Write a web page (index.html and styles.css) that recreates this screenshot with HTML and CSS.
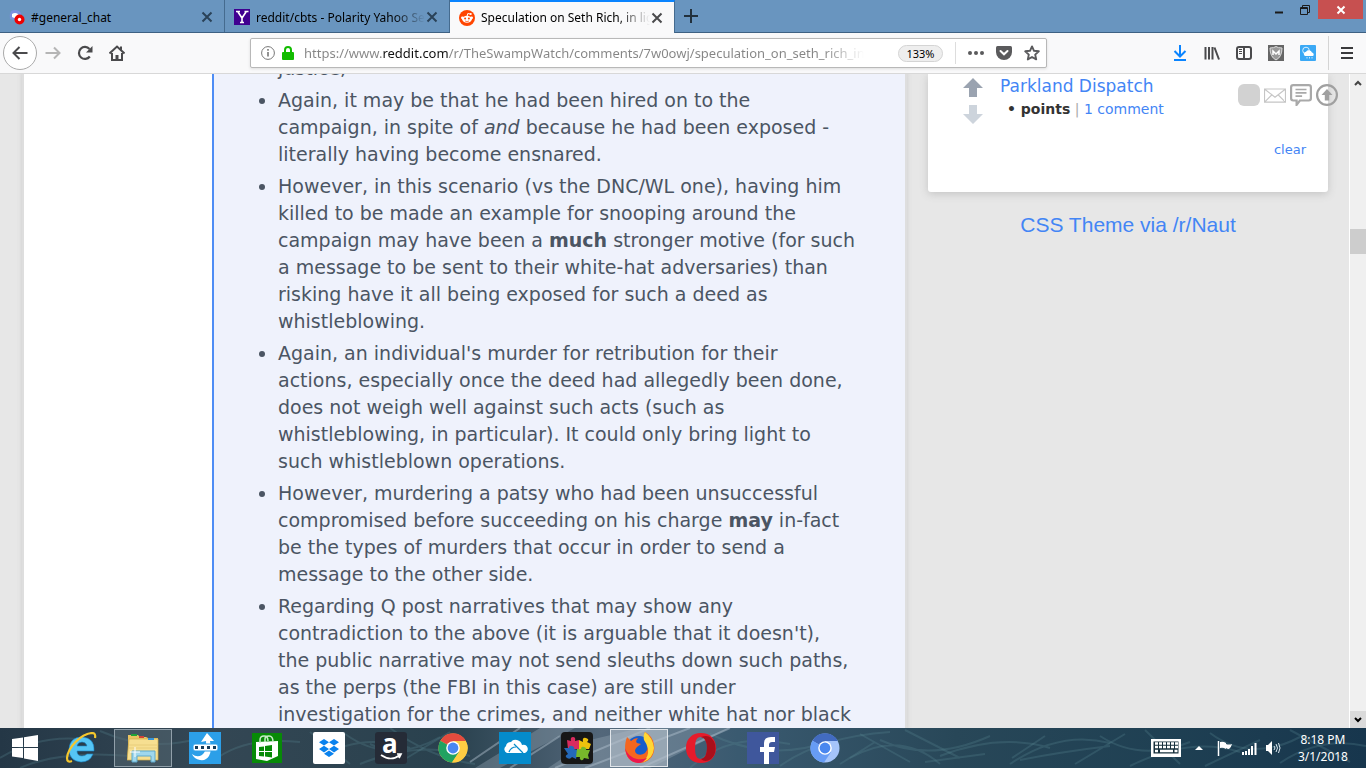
FILE: index.html
```
<!DOCTYPE html>
<html lang="en">
<head>
    <meta charset="utf-8">
    <title>Speculation on Seth Rich</title>
    <link rel="stylesheet" href="styles.css">
</head>
<body>
    <header class="tabbar">
        <div class="tab">
            <svg class="favicon" viewBox="0 0 16 16"><path d="M2 2Q6 0 10 2L12 4V10Q6 12 1 10Q0 6 2 2Z" fill="#7c8fe0"/><path d="M3 5Q6 3 9 5L10 8Q6 10 3 8Z" fill="#fff"/><circle cx="10.5" cy="10.5" r="5" fill="#e00"/><circle cx="10.5" cy="10.5" r="1.7" fill="#fff"/></svg>
            <button class="tab-title">#general_chat</button>
            <button class="tab-close" aria-label="Close tab"><svg viewBox="0 0 12 12"><path d="M1.5 1.5L10.5 10.5M10.5 1.5L1.5 10.5"/></svg></button>
        </div>
        <div class="tab">
            <svg class="favicon" viewBox="0 0 16 16"><path fill="#400090" d="M0 0h16v16H0z"/><path d="M4 3L8 9L12 3M8 9v5M2 2.5h4M10.5 2.5h4M6 13.5h4" fill="none" stroke="#fff" stroke-width="1.6"/></svg>
            <button class="tab-title fade">reddit/cbts - Polarity Yahoo Sea</button>
            <button class="tab-close" aria-label="Close tab"><svg viewBox="0 0 12 12"><path d="M1.5 1.5L10.5 10.5M10.5 1.5L1.5 10.5"/></svg></button>
        </div>
        <div class="tab active">
            <svg class="favicon" viewBox="0 0 16 16"><circle cx="8" cy="8" r="8" fill="#ff4500"/><path d="M8 6.5l.8-3 2.7.6" fill="none" stroke="#fff"/><circle cx="11.7" cy="4" r="1.1" fill="#fff"/><circle cx="3.4" cy="7.8" r="1.4" fill="#fff"/><circle cx="12.6" cy="7.8" r="1.4" fill="#fff"/><ellipse cx="8" cy="9.3" rx="4.8" ry="3.5" fill="#fff"/><circle cx="6.1" cy="8.6" r="1" fill="#ff4500"/><circle cx="9.9" cy="8.6" r="1" fill="#ff4500"/><path d="M6 11q2 1.2 4 0" fill="none" stroke="#ff4500" stroke-width=".7"/></svg>
            <button class="tab-title fade">Speculation on Seth Rich, in lig</button>
            <button class="tab-close" aria-label="Close tab"><svg viewBox="0 0 12 12"><path d="M1.5 1.5L10.5 10.5M10.5 1.5L1.5 10.5"/></svg></button>
        </div>
        <button class="new-tab" aria-label="New tab"><svg viewBox="0 0 14 14"><path d="M7 0v14M0 7h14"/></svg></button>
        <div class="window-buttons">
            <button aria-label="Minimize"><svg viewBox="0 0 10 10"><path d="M1 7.5h8" stroke="#1a1a1a" stroke-width="2"/></svg></button>
            <button aria-label="Restore"><svg viewBox="0 0 10 10"><path d="M.5 2.5h7v7h-7zM.5 3.5h7M2.5 2V.5h7v7H8" fill="none" stroke="#1a1a1a"/></svg></button>
            <button class="window-close" aria-label="Close"><svg viewBox="0 0 10 10"><path d="M1.5 1.5l7 7M8.5 1.5l-7 7" stroke="#fff" stroke-width="2"/></svg></button>
        </div>
    </header>

    <nav class="toolbar">
        <button class="back" aria-label="Back"><svg viewBox="0 0 16 16"><path d="M15.5 8H1.5M7.5 2l-6 6 6 6"/></svg></button>
        <button class="nav-button forward" aria-label="Forward"><svg viewBox="0 0 16 16"><path d="M.5 8h14M9 2.5l5.5 5.5L9 13.5"/></svg></button>
        <button class="nav-button" aria-label="Reload"><svg viewBox="0 0 16 16"><path d="M12.8 11.5A6 6 0 1 1 12.5 4" stroke-width="2.2"/><path d="M15.5 1v6.5H9z" fill="#4a4a4c" stroke="none"/></svg></button>
        <button class="nav-button" aria-label="Home"><svg viewBox="0 0 16 16"><path d="M.5 8.5L8 1.5l7.5 7M3 8v7h10V8M12 1.5v3" stroke-width="2"/><path d="M6.5 15v-5h3v5z" fill="#4a4a4c" stroke="none"/></svg></button>
        <form class="urlbar">
            <svg class="info" viewBox="0 0 14 14"><circle cx="7" cy="7" r="6.4" fill="none" stroke="#777"/><path d="M7 6v4.5M7 3v1.8" stroke="#777" stroke-width="1.6"/></svg>
            <svg class="lock" viewBox="0 0 12 14"><path d="M3 7V4a3 3 0 0 1 6 0v3" fill="none" stroke="#12bc00" stroke-width="2"/><rect y="6" width="12" height="8" rx="1" fill="#12bc00"/></svg>
            <input class="url" type="text" aria-label="Address" value="https://www.reddit.com/r/TheSwampWatch/comments/7w0owj/speculation_on_seth_rich_in_">
            <button type="button" class="zoom">133%</button>
            <span class="divider"></span>
            <button type="button" class="url-action" aria-label="Page actions"><svg viewBox="0 0 16 16"><g fill="#5a5a5c"><circle cx="2" cy="8" r="2"/><circle cx="8" cy="8" r="2"/><circle cx="14" cy="8" r="2"/></g></svg></button>
            <button type="button" class="url-action" aria-label="Save to Pocket"><svg viewBox="0 0 16 16"><path d="M1.5 1h13Q16 1 16 2.5V7a8 8 0 0 1-16 0V2.500Q0 1 1.5 1Z" fill="#5a5a5c"/><path d="M4.500 6L8 9.300 11.500 6" fill="none" stroke="#fff" stroke-width="2" stroke-linecap="round"/></svg></button>
            <button type="button" class="url-action" aria-label="Bookmark"><svg viewBox="0 0 16 16"><path d="M8 1.4l2 4.4 4.8.5-3.6 3.3 1 4.8L8 12l-4.2 2.4 1-4.8L1.200 6.300 6 5.800z" fill="none" stroke="#5a5a5c" stroke-width="1.9" stroke-linejoin="round"/></svg></button>
        </form>
        <div class="tools">
            <button aria-label="Downloads"><svg viewBox="0 0 16 16"><path d="M8 0v11M2.5 6L8 11.5 13.5 6M2 15h12" fill="none" stroke="#0a84ff" stroke-width="2"/></svg></button>
            <button aria-label="Library"><svg viewBox="0 0 16 16"><path d="M1.5 2v12.5M5 2v12.5M8.5 2v12.5M10.500 2.500l4.500 12" fill="none" stroke="#4a4a4c" stroke-width="2"/></svg></button>
            <button aria-label="Sidebars"><svg viewBox="0 0 16 16"><rect x="1" y="2" width="14" height="12" rx="2" fill="none" stroke="#4a4a4c" stroke-width="2"/><path d="M8 2v12" stroke="#4a4a4c" stroke-width="2"/><path d="M3 4.5h3M3 6.500h3M3 8.500h3" stroke="#4a4a4c"/></svg></button>
            <button aria-label="Shield extension"><svg viewBox="0 0 16 16"><path fill="#666" d="M0 0h16v16H0z"/><path d="M2 3Q6 3 8 1.500 10 3 14 3 14 12 8 15 2 12 2 3Z" fill="#999" stroke="#ddd"/><path d="M5 10V6l3 3 3-3v4" fill="none" stroke="#fff" stroke-width="1.5"/></svg></button>
            <button aria-label="Weather"><svg viewBox="0 0 16 16"><rect width="16" height="16" rx="1" fill="#3ba9f5"/><circle cx="6" cy="5.5" r="3.3" fill="none" stroke="#d8f0ff"/><path d="M5 11a2.300 2.300 0 0 1 1-4.300 3.500 3.500 0 0 1 6 .8A2 2 0 0 1 13 11Z" fill="#fff"/><path d="M7 12v1.500M9.500 12v1.500M12 12v1.500" stroke="#c4e7ff"/></svg></button>
            <span class="menu-divider"></span>
            <button aria-label="Menu"><svg viewBox="0 0 16 16"><path d="M2 3h12M2 8h12M2 13h12" stroke="#3a3a3c" stroke-width="2"/></svg></button>
        </div>
    </nav>

    <div class="viewport">
        <main class="thread">
            <article class="comment">
                <ul>
                    <li>justice,</li>
                    <li>Again, it may be that he had been hired on to the<br>campaign, in spite of <em>and</em> because he had been exposed -<br>literally having become ensnared.</li>
                    <li>However, in this scenario (vs the DNC/WL one), having him<br>killed to be made an example for snooping around the<br>campaign may have been a <strong>much</strong> stronger motive (for such<br>a message to be sent to their white-hat adversaries) than<br>risking have it all being exposed for such a deed as<br>whistleblowing.</li>
                    <li>Again, an individual's murder for retribution for their<br>actions, especially once the deed had allegedly been done,<br>does not weigh well against such acts (such as<br>whistleblowing, in particular). It could only bring light to<br>such whistleblown operations.</li>
                    <li>However, murdering a patsy who had been unsuccessful<br>compromised before succeeding on his charge <strong>may</strong> in-fact<br>be the types of murders that occur in order to send a<br>message to the other side.</li>
                    <li>Regarding Q post narratives that may show any<br>contradiction to the above (it is arguable that it doesn't),<br>the public narrative may not send sleuths down such paths,<br>as the perps (the FBI in this case) are still under<br>investigation for the crimes, and neither white hat nor black</li>
                </ul>
            </article>
        </main>
        <aside class="side">
            <section class="recent">
                <div class="entry">
                    <div class="votes">
                        <button aria-label="Upvote"><svg viewBox="0 0 20 19"><path d="M10 0l10 10h-6v9H6v-9H0z" fill="#9aa3b0"/></svg></button>
                        <button aria-label="Downvote"><svg viewBox="0 0 20 19"><path d="M10 19L0 9h6V0h8v9h6z" fill="#cdd4dc"/></svg></button>
                    </div>
                    <div>
                        <a class="entry-title" href="#">Parkland Dispatch</a>
                        <p class="entry-meta"><b>• points</b> <i>|</i> <a href="#">1 comment</a></p>
                    </div>
                </div>
                <a class="clear" href="#">clear</a>
            </section>
            <a class="theme" href="#">CSS Theme via /r/Naut</a>
        </aside>
        <div class="quick-icons">
            <button class="blank" aria-label="Settings"></button>
            <button aria-label="Messages"><svg viewBox="0 0 20 20"><path d="M.5 4.500h19v12H.5zM1 5l9 7 9-7M1 16l6-6M19 16l-6-6" fill="none" stroke="#c5c5c5"/></svg></button>
            <button aria-label="Comments"><svg viewBox="0 0 20 20"><path d="M3 1h14q2 0 2 2v10q0 2-2 2H9l-3 4v-4H3q-2 0-2-2V3q0-2 2-2z" fill="#fff" stroke="#a9a9a9" stroke-width="2"/><path d="M5 5h10M5 8h10M5 11h6" stroke="#a9a9a9" stroke-width="1.5"/></svg></button>
            <button aria-label="Back to top"><svg viewBox="0 0 20 20"><circle cx="10" cy="10" r="9" fill="none" stroke="#a0a0a0" stroke-width="2"/><path d="M10 4.500l5 5.500h-3v5H8v-5H5z" fill="#a0a0a0"/></svg></button>
        </div>
        <div class="scrollbar">
            <button aria-label="Scroll up"><svg viewBox="0 0 8 8"><path d="M1 6l3-3 3 3"/></svg></button>
            <span class="track-before"></span>
            <span class="thumb"></span>
            <span class="track-after"></span>
            <button class="pressed" aria-label="Scroll down"><svg viewBox="0 0 8 8"><path d="M1 2l3 3 3-3"/></svg></button>
        </div>
    </div>

    <footer class="taskbar">
        <svg class="wallpaper" viewBox="0 0 1366 40" preserveAspectRatio="none">
            <g fill="none" stroke="#5b8a94" stroke-opacity=".28" stroke-width="2">
                <path d="M0 30Q40 5 90 12M20 40Q60 22 130 28M100 3Q150 25 200 10M210 36Q240 8 300 14M320 30Q360 4 410 20M345 6Q390 38 440 9M360 36Q420 12 470 28M390 0Q430 30 475 36"/>
                <path d="M690 40Q730 3 790 16M710 6Q770 35 830 13M780 38Q820 9 890 4M850 30Q900 2 940 36M880 12Q930 35 990 8M940 28Q1000 5 1050 20M1010 36Q1060 2 1110 15M1100 8Q1140 34 1190 14M1130 38Q1190 8 1240 24M1210 5Q1250 35 1300 9M1280 35Q1320 8 1366 18"/>
                <path d="M840 36L875 14M860 6L910 34M905 2L960 30M925 34L985 26M1012 30L1045 8M1020 32Q1060 24 1110 18M1075 36L1125 6M1145 2L1180 36M1205 38L1260 12M1290 2L1350 34M370 16L400 30M400 34L450 4M310 4L350 36"/>
            </g>
            <path d="M475 40L540 0H575L500 40zM548 40L590 12 640 0H730L650 40z" fill="#9aabb9" fill-opacity=".35"/>
            <path d="M555 40L650 0M585 40L690 0M640 40L730 0M470 34L520 0M510 40L560 8" stroke="#b4c4d0" stroke-opacity=".45" stroke-width="2"/>
        </svg>
        <button class="task start" aria-label="Start"><svg viewBox="0 0 26 26"><path d="M0 4l11-1.600V12H0zM12 2.200L26 0v12H12zM0 13h11v10L0 21.500zM12 13h14v13l-14-2.500z" fill="#fff"/></svg></button>
        <button class="task" aria-label="Internet Explorer"><svg viewBox="0 0 32 32"><path d="M29 19H12q0 5 5 5 3 0 5-2h6q-3 8-12 8Q4 29 4 17 5 5 17 5q13 1 12 14zM12 14h10q-1-4-5-4t-5 4z" fill="#55c5f5" fill-rule="evenodd" stroke="#1786c9" stroke-width=".6"/><path d="M7 29q-5 2-5-3C3 15 16 2 27 1q4 0 3 5" fill="none" stroke="#f6c72d" stroke-width="2.200"/></svg></button>
        <button class="task open" aria-label="File Explorer"><svg viewBox="0 0 32 32"><path d="M1 7V3h10l2 2h6l2 1h10v21H1z" fill="#e9c462"/><path d="M2 7h29v21H0z" fill="#f6df91" stroke="#d2ac47" stroke-width=".7"/><path d="M4 2h6v2H4z" fill="#20a336"/><path d="M12 4h5v2h-5z" fill="#d34336"/><path d="M21 6h6v2h-6z" fill="#3793d6"/><path d="M2 13h29M2 16h29" stroke="#e8cd7b"/><path d="M5 30V19h23v11h-4v-6H10v6z" fill="#9fd7ed" stroke="#5fa9cb"/><path d="M8 15v10M3 20h10" stroke="#fff"/></svg></button>
        <button class="task" aria-label="Password manager"><svg viewBox="0 0 32 32"><path fill="#2c9fe8" d="M0 0h32v32H0z"/><path d="M3 22q5 4 10 1 5-4 4-14l-5 1 6-9 7 8-4 0q2 10-1 15-3 5-9 4-6-1-8-6z" fill="#fff"/><rect x="4" y="12" width="25" height="7" rx="2" fill="#fff" stroke="#2c9fe8"/><path d="M6 15.500h3M12 15.500h3M18 15.500h3M24 15.500h3" stroke="#153d5b" stroke-width="3"/></svg></button>
        <button class="task" aria-label="Store"><svg viewBox="0 0 32 32"><path fill="#078a07" d="M1 1h30v30H1z"/><path d="M5 10l22-1v15l-11 5-11-2z" fill="#fff"/><path d="M9 11V8q0-4 4-4t4 5M14 10V7q0-3 4-3t4 6" fill="none" stroke="#c9edc9" stroke-width="1.5"/><path d="M8 15l5-.6V19H8zM14 14l7-1v6h-7zM8 20h5v4.500L8 24zM14 20h7v5.500l-7-1z" fill="#078a07"/></svg></button>
        <button class="task" aria-label="Dropbox"><svg viewBox="0 0 32 32"><rect width="32" height="32" rx="2" fill="#fff"/><path d="M11 7l5 3.300-5 3.300-5-3.300zM21 7l5 3.300-5 3.300-5-3.300zM11 13.800l5 3.300-5 3.300-5-3.300zM21 13.800l5 3.300-5 3.300-5-3.300zM16 18.500l5 3.300-5 3.300-5-3.300z" fill="#0a82ee"/></svg></button>
        <button class="task" aria-label="Amazon"><svg viewBox="0 0 32 32"><rect width="32" height="32" rx="3" fill="#252b37"/><text class="amazon" x="7" y="21">a</text><path d="M6 23q10 7 19 0M22 22l4 0-2 4" fill="none" stroke="#fff" stroke-width="1.7"/></svg></button>
        <button class="task" aria-label="Chrome"><svg viewBox="0 0 32 32"><circle cx="16" cy="16" r="14.5" fill="#ffcd43"/><path d="M16 16L3.400 8.700A14.500 14.500 0 0 1 28.800 9H16z" fill="#e34b3e"/><path d="M3.400 8.700A14.500 14.500 0 0 0 15 30.500l7-10.500-6-4z" fill="#20a261"/><path d="M28.800 9H16v7l6 4-7 10.500A14.500 14.500 0 0 0 28.800 9z" fill="#ffcd43"/><circle cx="16" cy="16" r="6.8" fill="#fff"/><circle cx="16" cy="16" r="5.4" fill="#4a87f2"/></svg></button>
        <button class="task" aria-label="Cloud storage"><svg viewBox="0 0 32 32"><path fill="#058bcb" d="M0 0h32v32H0z"/><path d="M8 21a4 4 0 0 1-1-7 5 5 0 0 1 5-4q2-3 6-2 4 1 5 5a4 4 0 0 1 3 8z" fill="#fff"/><path d="M15 12l9 9M10 20q2-5 7-5" fill="none" stroke="#058bcb" stroke-width="1.2"/></svg></button>
        <button class="task" aria-label="Puzzle"><svg viewBox="0 0 32 32"><rect width="32" height="32" rx="4" fill="#171717"/><path d="M6 8l4 1q-1-4 2-4t2 4l4-1v9H7z" fill="#d92b5e"/><path d="M18 8l4 2q-1-5 3-4t1 4l4 2-2 5H18z" fill="#edc20d"/><path d="M3 16l5 0q0-3 3-2t2 3l4 1-2 9-4-2q-2 3-5 1t1-4z" fill="#2469ba"/><path d="M16 17l4 0q0-3 3-2t2 3l4 0-2 5 1 4-5-1q-1 3-3 2t-1-3l-4 0z" fill="#77b82b"/></svg></button>
        <button class="task open current" aria-label="Firefox"><svg viewBox="0 0 32 32"><circle cx="16" cy="17" r="13" fill="#155dcc"/><path d="M4 5l4 4q3-3 7-3-3 3-1 5l4 1-4 3q-4 4 0 7 4 2 8-1 5-5 1-12-3-5-1-9 8 4 9 13c2 11-6 18-15 18C4 31-1 19 4 5z" fill="#f5661e"/><path d="M22 0q8 6 9 16-1 11-11 14 6-5 5-13-1-5-4-9-1-5 1-8z" fill="#ffd735"/><path d="M2 16q3 9 12 11 5 1 10-1-4 5-9 5Q4 30 2 16z" fill="#ec164f"/></svg></button>
        <button class="task" aria-label="Opera"><svg viewBox="0 0 32 32"><path d="M16 1C7 1 1 7 1 16s6 15 15 15 15-6 15-15S25 1 16 1zM16 5q6 1 6 11t-6 11-6-11 6-11z" fill="#e51b2b" fill-rule="evenodd"/><path d="M16 5q10-4 14 7 2 10-4 15-6 4-10 0 6-1 6-11T16 5z" fill="#a90f1b"/></svg></button>
        <button class="task" aria-label="Facebook"><svg viewBox="0 0 32 32"><path fill="#3f579c" d="M0 0h32v32H0z"/><path d="M17 32V20h-4v-5h4v-4q0-6 7-6h4v5h-3q-3 0-3 3v2h6l-1 5h-5v12z" fill="#fff"/></svg></button>
        <button class="task" aria-label="Chromium"><svg viewBox="0 0 32 32"><circle cx="16" cy="16" r="14.5" fill="#a5c4fa"/><path d="M16 16L3.400 8.700A14.500 14.500 0 0 1 28.800 9H16z" fill="#426bc0"/><path d="M3.400 8.700A14.500 14.500 0 0 0 15 30.500l7-10.500-6-4z" fill="#679cf5"/><circle cx="16" cy="16" r="6.8" fill="#fff"/><circle cx="16" cy="16" r="5.4" fill="#4a87ef"/></svg></button>
        <div class="tray">
            <button class="keyboard" aria-label="Touch keyboard"><svg viewBox="0 0 30 18"><path d="M0 0h30v18H0z" fill="#fff"/><path d="M2.500 2.500h25v12h-25z" fill="#17303c"/><path d="M4 4.500h23M4 8h23" stroke="#fff" stroke-width="2.500" stroke-dasharray="3 1"/><path d="M4 12h3M9 12h13M23.500 12h3" stroke="#fff" stroke-width="2.500"/></svg></button>
            <button class="chevron" aria-label="Show hidden icons"><svg viewBox="0 0 8 6"><path d="M4 1l4 4H0z" fill="#fff"/></svg></button>
            <button class="status" aria-label="Action center"><svg viewBox="0 0 16 16"><path d="M1.500 1v15" stroke="#fff" stroke-width="1.5"/><path d="M3 2q3-1 6 1v6Q6 7 3 8zM9 4q3 1 6 0-1 4-3 5-2 0-3-1z" fill="#fff"/></svg></button>
            <button class="status" aria-label="Network"><svg viewBox="0 0 16 16"><path d="M2 15v-3M5 15v-4M8 15V9M11 15V6M14.500 15V3" stroke="#fff" stroke-width="2"/></svg></button>
            <button class="status" aria-label="Volume"><svg viewBox="0 0 16 16"><path d="M1 5h2l4-4v14l-4-4H1z" fill="#fff"/><path d="M9 6q2 2 0 4M11 4q3 4 0 8M13.500 3q3 5 0 10" fill="none" stroke="#dce7ee"/></svg></button>
            <button class="clock">8:18 PM<br>3/1/2018</button>
        </div>
    </footer>
</body>
</html>
```

FILE: styles.css
```
* {
    box-sizing: border-box;
}
body {
    margin: 0;
    height: 100vh;
    display: flex;
    flex-direction: column;
    overflow: hidden;
    font: 12px "Noto Sans", sans-serif;
}
button {
    padding: 0;
    border: 0;
    background: none;
    font: inherit;
    color: inherit;
}
svg {
    display: block;
}
a {
    color: #4385f5;
    text-decoration: none;
}

/* tabs */
.tabbar {
    display: flex;
    height: 33px;
    flex-shrink: 0;
    background: #6995bf;
    border-bottom: 1px solid #3e6183;
}
.tab {
    display: flex;
    align-items: center;
    width: 225px;
    height: 32px;
    padding: 2px 11px 0 9px;
    border-right: 1px solid #456b8f;
}
.tab.active {
    height: 33px;
    background: #f9f9fa;
    border-top: 2px solid #0a84ff;
    padding-top: 0;
}
.favicon {
    width: 16px;
    height: 16px;
    flex-shrink: 0;
}
.tab-title {
    flex: 1;
    min-width: 0;
    margin: 0 1px 0 6px;
    text-align: left;
    white-space: nowrap;
    overflow: hidden;
}
.tab-title.fade {
    -webkit-mask-image: linear-gradient(to left, transparent, #000 32px);
    mask-image: linear-gradient(to left, transparent, #000 32px);
}
.tab-close svg {
    width: 12px;
    height: 12px;
    stroke: #2a4258;
    stroke-width: 2;
}
.active .tab-close svg {
    stroke: #4a4a4c;
}
.new-tab {
    width: 32px;
}
.new-tab svg {
    width: 14px;
    height: 14px;
    margin: 0 auto;
    stroke: #22303c;
    stroke-width: 2;
}
.window-buttons {
    display: flex;
    height: 19px;
    margin-left: auto;
    margin-right: 3px;
}
.window-buttons button {
    width: 26px;
}
.window-buttons svg {
    width: 10px;
    height: 10px;
    margin: 0 auto;
}
.window-buttons .window-close {
    width: 45px;
    background: #c75050;
}

/* toolbar */
.toolbar {
    display: flex;
    align-items: center;
    height: 41px;
    flex-shrink: 0;
    padding: 0 11px 0 3px;
    background: #f9f9fa;
    border-bottom: 1px solid #d8d8d8;
}
.back {
    width: 34px;
    height: 34px;
    border: 1px solid #aaa;
    border-radius: 50%;
    background: #fff;
}
.back svg,
.nav-button svg {
    width: 16px;
    height: 16px;
    margin: 0 auto;
    fill: none;
    stroke: #4a4a4c;
    stroke-width: 2;
}
.nav-button {
    width: 32px;
}
.nav-button.forward svg {
    stroke: #b5b5b5;
}
.urlbar {
    display: flex;
    align-items: center;
    flex: 0 1 797px;
    height: 30px;
    margin-left: 117px;
    padding: 0 0 0 10px;
    background: #fff;
    border: 1px solid #b8b8b8;
    border-radius: 2px;
    box-shadow: 0 1px 3px #ddd;
}
.info {
    width: 14px;
    height: 14px;
}
.lock {
    width: 12px;
    height: 14px;
    margin: 0 10px 0 7px;
}
/* the host name is darker than the rest of the address */
.url {
    flex: 0 1 568px;
    min-width: 0;
    padding: 0;
    border: 0;
    font: 13px "Noto Sans", sans-serif;
    color: transparent;
    background: linear-gradient(to right, #858585 78px, #111 78px, #111 145px, #858585 145px, #858585 520px, transparent 560px);
    -webkit-background-clip: text;
    background-clip: text;
}
.zoom {
    width: 45px;
    height: 17px;
    margin-left: auto;
    border: 1px solid #d4d4d4;
    border-radius: 9px;
    background: #eee;
    font-size: 11px;
    line-height: 15px;
}
.divider {
    width: 1px;
    height: 22px;
    margin: 0 6px 0 12px;
    background: #ddd;
}
.url-action {
    width: 28px;
}
.url-action svg {
    width: 16px;
    height: 16px;
    margin: 0 auto;
}
.tools {
    display: flex;
    align-items: center;
    gap: 16px;
    margin-left: auto;
}
.tools svg {
    width: 16px;
    height: 16px;
}
.menu-divider {
    width: 1px;
    height: 34px;
    margin: 0 -6px 0 -4px;
    background: #d4d4d4;
}

/* page */
.viewport {
    position: relative;
    display: flex;
    flex: 1;
    min-height: 0;
    overflow: hidden;
    padding-left: 24px;
    background: #e7e7e7;
    font-family: "DejaVu Sans", Verdana, sans-serif;
}
.thread {
    flex: 1;
    padding-left: 188px;
    background: #fff;
    box-shadow: 0 0 0 2px #dedede, 0 0 5px 2px #ccc;
}
.comment {
    min-height: 100%;
    padding-left: 64px;
    border-left: 2px solid #4e8df5;
    background: #eff2fc;
}
.comment ul {
    margin: -19px 0 0;
    padding: 0;
    font-size: 19px;
    line-height: 27px;
    color: #4b5563;
}
.comment li {
    margin-bottom: 5px;
    white-space: nowrap;
}
.side {
    width: 444px;
    flex-shrink: 0;
    padding: 0 21px 0 23px;
}
.recent {
    height: 118px;
    padding: 1px 22px 0 34px;
    border-radius: 0 0 3px 3px;
    background: #fff;
    box-shadow: 0 2px 8px #c4c4c4;
    display: flex;
    flex-direction: column;
}
.entry {
    display: flex;
    gap: 16px;
}
.votes {
    display: flex;
    flex-direction: column;
    gap: 8px;
    padding-top: 3px;
}
.votes svg {
    width: 22px;
    height: 19px;
}
.entry-title {
    font-size: 17px;
    line-height: 23px;
}
.entry-meta {
    margin: 0 0 0 7px;
    font-size: 14px;
    line-height: 22px;
    color: #333;
}
.entry-meta i {
    font-style: normal;
    color: #aaa;
}
.clear {
    align-self: flex-end;
    margin-top: 18px;
    font-size: 13px;
}
.theme {
    display: block;
    margin-top: 20px;
    text-align: center;
    font: 21px/25px "Liberation Sans", Arial, sans-serif;
}
.quick-icons {
    position: absolute;
    top: 10px;
    right: 28px;
    display: flex;
    gap: 4px;
}
.quick-icons button {
    width: 22px;
    height: 22px;
}
.quick-icons .blank {
    border-radius: 6px;
    background: #d2d2d2;
}
.scrollbar {
    display: flex;
    flex-direction: column;
    width: 17px;
    flex-shrink: 0;
    background: #f0f0f0;
    border-left: 1px solid #fff;
}
.scrollbar button {
    height: 17px;
}
.scrollbar svg {
    width: 8px;
    height: 8px;
    margin: 0 auto;
    fill: none;
    stroke: #444;
    stroke-width: 2;
}
.scrollbar .pressed {
    background: #dadada;
}
.scrollbar .pressed svg {
    stroke: #000;
}
.track-before {
    flex: 138;
}
.thumb {
    height: 25px;
    background: #cdcdcd;
}
.track-after {
    flex: 457;
}

/* taskbar */
.taskbar {
    position: relative;
    display: flex;
    height: 40px;
    flex-shrink: 0;
    background: linear-gradient(to right, #243746, #344754 15%, #29414e 33%, #53677a 44%, #3a5a70 54%, #284758 70%, #1f4053 85%, #17364d);
    color: #fff;
}
.wallpaper {
    position: absolute;
    width: 100%;
    height: 100%;
}
.task {
    position: relative;
    width: 58px;
    height: 38px;
    margin: 1px 2px;
}
.task svg {
    width: 32px;
    height: 32px;
    margin: 0 auto;
}
.task.start {
    width: 46px;
}
.start svg {
    width: 26px;
    height: 26px;
}
.open {
    border: 1px solid #91a0aa;
    background: #58697480;
}
.current {
    border-color: #e0e5ea;
    background: #b4c0cba0;
}
.amazon {
    font: bold 26px "Open Sans", sans-serif;
    fill: #fff;
}
.tray {
    position: relative;
    display: flex;
    align-items: center;
    margin-left: auto;
    padding-right: 18px;
}
.keyboard svg {
    width: 30px;
    height: 18px;
}
.chevron svg {
    width: 8px;
    height: 6px;
    margin: 0 14px;
}
.status {
    margin-right: 8px;
}
.status svg {
    width: 16px;
    height: 16px;
}
.clock {
    margin-left: 9px;
    font: 12px/17px "Noto Sans", sans-serif;
}
```
